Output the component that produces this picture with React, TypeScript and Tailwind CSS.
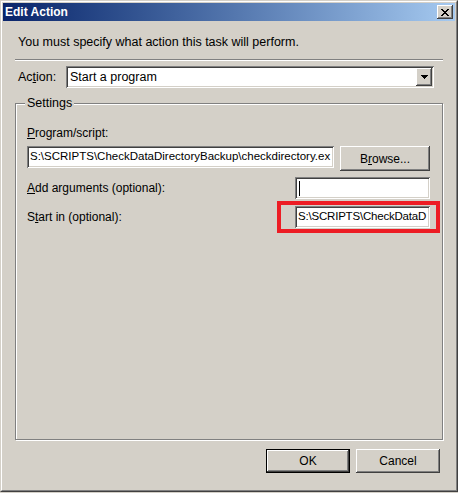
const font = { fontFamily: '"Liberation Sans", Arial, sans-serif' };

function Sunken({ className = "", children }: { className?: string; children?: React.ReactNode }) {
  return (
    <div
      className={`bg-white shadow-[inset_1px_1px_0_#808080,inset_-1px_-1px_0_#ffffff,inset_2px_2px_0_#404040,inset_-2px_-2px_0_#d4d0c8] ${className}`}
    >
      {children}
    </div>
  );
}

function Button({ label, isDefault, className = "" }: { label: React.ReactNode; isDefault?: boolean; className?: string }) {
  return (
    <div className={`${isDefault ? "border border-black" : ""} ${className}`}>
      <div className="w-full h-full flex items-center justify-center text-[12px] text-black bg-[#d4d0c8] shadow-[inset_-1px_-1px_0_#404040,inset_1px_1px_0_#ffffff,inset_-2px_-2px_0_#808080,inset_2px_2px_0_#d4d0c8]">
        {label}
      </div>
    </div>
  );
}

export default function App() {
  return (
    <div style={font} className="w-[458px] h-[493px] bg-[#d4d0c8] text-black select-none">
      {/* window frame */}
      <div className="w-full h-[492px] border border-t-[#d4d0c8] border-l-[#d4d0c8] border-r-[#404040] border-b-[#404040]">
        <div className="w-full h-full border border-t-white border-l-white border-r-[#808080] border-b-[#808080] p-px flex flex-col">
          {/* Title bar */}
          <div className="h-[18px] shrink-0 flex items-center justify-between bg-gradient-to-r from-[#0a246a] to-[#a6caf0] pl-[2px] pr-[2px]">
            <span className="text-white font-bold text-[12px] leading-none">Edit Action</span>
            <div className="w-[16px] h-[14px] flex items-center justify-center bg-[#d4d0c8] shadow-[inset_-1px_-1px_0_#404040,inset_1px_1px_0_#ffffff,inset_-2px_-2px_0_#808080]">
              <svg width="8" height="7" viewBox="0 0 8 7" shapeRendering="crispEdges">
                <path d="M0 0h2v1H0zM6 0h2v1H6zM1 1h2v1H1zM5 1h2v1H5zM2 2h4v1H2zM3 3h2v1H3zM2 4h4v1H2zM1 5h2v1H1zM5 5h2v1H5zM0 6h2v1H0zM6 6h2v1H6z" fill="#000" />
              </svg>
            </div>
          </div>

          {/* Body */}
          <div className="flex-1 flex flex-col px-[12px]">
            <p className="mt-[14px] ml-[3px] h-[14px] leading-[14px] text-[12.5px]">
              You must specify what action this task will perform.
            </p>

            <div className="mt-[10px] h-[2px] border-t border-t-[#808080] border-b border-b-white" />

            {/* Action row */}
            <div className="mt-[5px] flex items-center h-[22px]">
              <span className="ml-[3px] w-[48px] text-[12.5px]">
                Ac<span className="underline">t</span>ion:
              </span>
              <Sunken className="w-[368px] h-[22px] flex items-center pl-[4px] pr-[2px]">
                <span className="flex-1 text-[12.5px]">Start a program</span>
                <div className="w-[16px] h-[18px] flex items-center justify-center bg-[#d4d0c8] shadow-[inset_-1px_-1px_0_#404040,inset_1px_1px_0_#ffffff,inset_-2px_-2px_0_#808080,inset_2px_2px_0_#d4d0c8]">
                  <svg width="7" height="4" viewBox="0 0 7 4" shapeRendering="crispEdges">
                    <path d="M0 0h7v1H0zM1 1h5v1H1zM2 2h3v1H2zM3 3h1v1H3z" fill="#000" />
                  </svg>
                </div>
              </Sunken>
            </div>

            {/* Settings group */}
            <div className="relative mt-[15px] h-[337px] border border-[#808080] shadow-[inset_1px_1px_0_#ffffff,1px_1px_0_#ffffff] pl-[11px] flex flex-col">
              <span className="absolute left-[9px] -top-[8px] px-[2px] bg-[#d4d0c8] text-[12.5px] leading-[14px]">Settings</span>

              <span className="mt-[22px] h-[14px] leading-[14px] text-[12px]">
                <span className="underline">P</span>rogram/script:
              </span>
              <div className="mt-[6px] flex items-start gap-[6px]">
                <Sunken className="w-[307px] h-[22px] overflow-hidden flex items-center pl-[3px]">
                  <span className="whitespace-nowrap text-[11.5px]">S:\SCRIPTS\CheckDataDirectoryBackup\checkdirectory.ex</span>
                </Sunken>
                <Button
                  className="w-[90px] h-[25px]"
                  label={
                    <span>
                      B<span className="underline">r</span>owse...
                    </span>
                  }
                />
              </div>

              <div className="mt-[6px] flex items-center h-[22px]">
                <span className="w-[268px] text-[12px]">
                  <span className="underline">A</span>dd arguments (optional):
                </span>
                <Sunken className="w-[135px] h-[22px] flex items-center pl-[4px]">
                  <div className="w-px h-[15px] bg-black" />
                </Sunken>
              </div>

              <div className="mt-[7px] flex items-center h-[22px]">
                <span className="w-[268px] text-[12px]">
                  S<span className="underline">t</span>art in (optional):
                </span>
                <div className="relative">
                  <Sunken className="w-[135px] h-[22px] overflow-hidden flex items-center pl-[3px]">
                    <span className="whitespace-nowrap text-[11.5px] tracking-[-0.2px]">S:\SCRIPTS\CheckDataD</span>
                  </Sunken>
                  <div className="absolute -left-[18px] -right-[10px] -top-[5px] -bottom-[5px] border-[4px] border-[#ed1c24]" />
                </div>
              </div>
            </div>

            {/* Buttons */}
            <div className="mt-[9px] flex justify-end gap-[6px] mr-[3px]">
              <Button isDefault className="w-[84px] h-[24px]" label="OK" />
              <Button className="w-[84px] h-[24px]" label="Cancel" />
            </div>
          </div>
        </div>
      </div>
    </div>
  );
}
